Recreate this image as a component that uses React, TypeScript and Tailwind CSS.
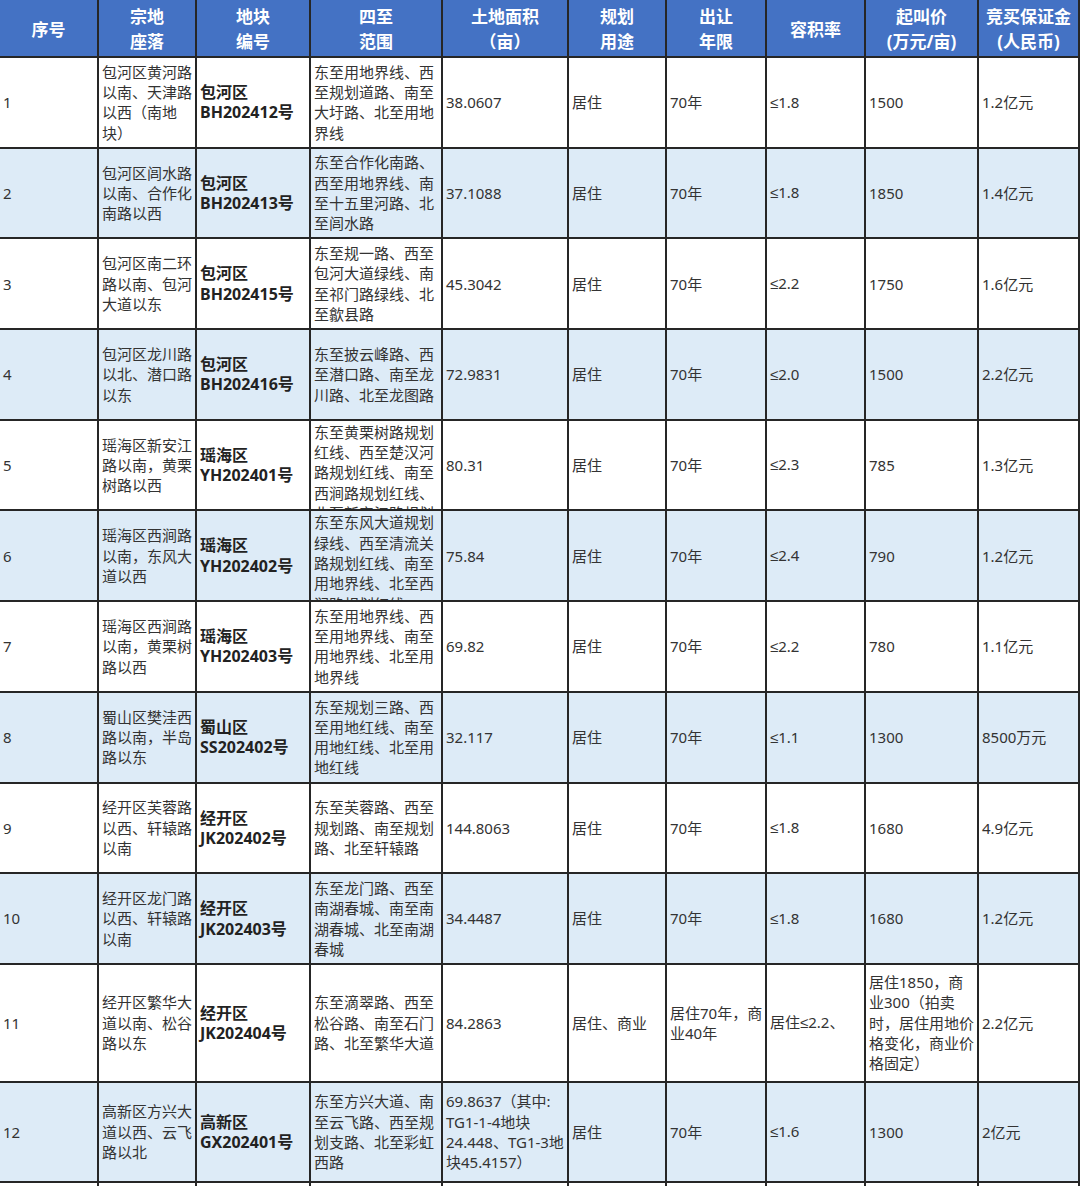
type Row = {
  no: string;
  site: string[];
  code: [string, string];
  bounds: string[];
  area: string[];
  use: string[];
  term: string[];
  far: string[];
  price: string[];
  deposit: string;
  clip?: boolean;
};

const headers = [
  ["序号"],
  ["宗地", "座落"],
  ["地块", "编号"],
  ["四至", "范围"],
  ["土地面积", "（亩）"],
  ["规划", "用途"],
  ["出让", "年限"],
  ["容积率"],
  ["起叫价", "(万元/亩)"],
  ["竞买保证金", "(人民币)"],
];

const rows: Row[] = [
  {
    no: "1",
    site: ["包河区黄河路", "以南、天津路", "以西（南地", "块）"],
    code: ["包河区", "BH202412号"],
    bounds: ["东至用地界线、西", "至规划道路、南至", "大圩路、北至用地", "界线"],
    area: ["38.0607"],
    use: ["居住"],
    term: ["70年"],
    far: ["≤1.8"],
    price: ["1500"],
    deposit: "1.2亿元",
  },
  {
    no: "2",
    site: ["包河区闾水路", "以南、合作化", "南路以西"],
    code: ["包河区", "BH202413号"],
    bounds: ["东至合作化南路、", "西至用地界线、南", "至十五里河路、北", "至闾水路"],
    area: ["37.1088"],
    use: ["居住"],
    term: ["70年"],
    far: ["≤1.8"],
    price: ["1850"],
    deposit: "1.4亿元",
  },
  {
    no: "3",
    site: ["包河区南二环", "路以南、包河", "大道以东"],
    code: ["包河区", "BH202415号"],
    bounds: ["东至规一路、西至", "包河大道绿线、南", "至祁门路绿线、北", "至歙县路"],
    area: ["45.3042"],
    use: ["居住"],
    term: ["70年"],
    far: ["≤2.2"],
    price: ["1750"],
    deposit: "1.6亿元",
  },
  {
    no: "4",
    site: ["包河区龙川路", "以北、潜口路", "以东"],
    code: ["包河区", "BH202416号"],
    bounds: ["东至披云峰路、西", "至潜口路、南至龙", "川路、北至龙图路"],
    area: ["72.9831"],
    use: ["居住"],
    term: ["70年"],
    far: ["≤2.0"],
    price: ["1500"],
    deposit: "2.2亿元",
  },
  {
    no: "5",
    site: ["瑶海区新安江", "路以南，黄栗", "树路以西"],
    code: ["瑶海区", "YH202401号"],
    bounds: ["东至黄栗树路规划", "红线、西至楚汉河", "路规划红线、南至", "西涧路规划红线、", "北至新安江路规划", "红线"],
    area: ["80.31"],
    use: ["居住"],
    term: ["70年"],
    far: ["≤2.3"],
    price: ["785"],
    deposit: "1.3亿元",
    clip: true,
  },
  {
    no: "6",
    site: ["瑶海区西涧路", "以南，东风大", "道以西"],
    code: ["瑶海区", "YH202402号"],
    bounds: ["东至东风大道规划", "绿线、西至清流关", "路规划红线、南至", "用地界线、北至西", "涧路规划红线"],
    area: ["75.84"],
    use: ["居住"],
    term: ["70年"],
    far: ["≤2.4"],
    price: ["790"],
    deposit: "1.2亿元",
    clip: true,
  },
  {
    no: "7",
    site: ["瑶海区西涧路", "以南，黄栗树", "路以西"],
    code: ["瑶海区", "YH202403号"],
    bounds: ["东至用地界线、西", "至用地界线、南至", "用地界线、北至用", "地界线"],
    area: ["69.82"],
    use: ["居住"],
    term: ["70年"],
    far: ["≤2.2"],
    price: ["780"],
    deposit: "1.1亿元",
  },
  {
    no: "8",
    site: ["蜀山区樊洼西", "路以南，半岛", "路以东"],
    code: ["蜀山区", "SS202402号"],
    bounds: ["东至规划三路、西", "至用地红线、南至", "用地红线、北至用", "地红线"],
    area: ["32.117"],
    use: ["居住"],
    term: ["70年"],
    far: ["≤1.1"],
    price: ["1300"],
    deposit: "8500万元",
  },
  {
    no: "9",
    site: ["经开区芙蓉路", "以西、轩辕路", "以南"],
    code: ["经开区", "JK202402号"],
    bounds: ["东至芙蓉路、西至", "规划路、南至规划", "路、北至轩辕路"],
    area: ["144.8063"],
    use: ["居住"],
    term: ["70年"],
    far: ["≤1.8"],
    price: ["1680"],
    deposit: "4.9亿元",
  },
  {
    no: "10",
    site: ["经开区龙门路", "以西、轩辕路", "以南"],
    code: ["经开区", "JK202403号"],
    bounds: ["东至龙门路、西至", "南湖春城、南至南", "湖春城、北至南湖", "春城"],
    area: ["34.4487"],
    use: ["居住"],
    term: ["70年"],
    far: ["≤1.8"],
    price: ["1680"],
    deposit: "1.2亿元",
  },
  {
    no: "11",
    site: ["经开区繁华大", "道以南、松谷", "路以东"],
    code: ["经开区", "JK202404号"],
    bounds: ["东至滴翠路、西至", "松谷路、南至石门", "路、北至繁华大道"],
    area: ["84.2863"],
    use: ["居住、商业"],
    term: ["居住70年，商", "业40年"],
    far: ["居住≤2.2、"],
    price: ["居住1850，商", "业300（拍卖", "时，居住用地价", "格变化，商业价", "格固定）"],
    deposit: "2.2亿元",
  },
  {
    no: "12",
    site: ["高新区方兴大", "道以西、云飞", "路以北"],
    code: ["高新区", "GX202401号"],
    bounds: ["东至方兴大道、南", "至云飞路、西至规", "划支路、北至彩虹", "西路"],
    area: ["69.8637（其中:", "TG1-1-4地块", "24.448、TG1-3地", "块45.4157）"],
    use: ["居住"],
    term: ["70年"],
    far: ["≤1.6"],
    price: ["1300"],
    deposit: "2亿元",
  },
];

// the ≤ sign falls back to the CJK face (too wide), so give it a Latin one
function Text({ text }: { text: string }) {
  const parts = text.split("≤");
  return (
    <>
      {parts.map((p, i) => (
        <span key={i}>
          {i > 0 && <span className="font-['Liberation_Sans',sans-serif]">≤</span>}
          {p}
        </span>
      ))}
    </>
  );
}

function Cell({
  lines,
  bg,
  bold,
  clip,
}: {
  lines: string[];
  bg: string;
  bold?: boolean;
  clip?: boolean;
}) {
  return (
    <div
      className={`${bg} flex flex-col overflow-hidden pl-[3px] leading-[20.3px] ${
        clip ? "justify-start pt-[1px]" : "justify-center"
      } ${bold ? "text-[16px] font-bold text-[#222]" : "text-[15px] text-[#333]"}`}
    >
      {lines.map((l, i) => (
        <span key={i} className="block whitespace-nowrap">
          <Text text={l} />
        </span>
      ))}
    </div>
  );
}

export default function App() {
  return (
    <div className="w-[1080px] bg-white font-['Noto_Sans','Noto_Sans_CJK_SC',sans-serif]">
      <div className="grid grid-cols-[97px_96px_112px_130px_124px_96px_98px_97px_111px_99px] grid-rows-[56px_repeat(10,88.7px)_116px_98px_40px] gap-[2px] border-r-2 border-[#262626] bg-[#262626]">
        {headers.map((h, i) => (
          <div
            key={i}
            className="flex flex-col items-center justify-center bg-[#4472C4] pt-[2px] text-center text-[17px] font-bold leading-[25px] text-white"
          >
            {h.map((t, j) => (
              <span key={j} className="whitespace-nowrap">
                {t}
              </span>
            ))}
          </div>
        ))}
        {rows.map((r, i) => {
          const bg = i % 2 === 0 ? "bg-white" : "bg-[#DDEBF7]";
          return [
            <Cell key={`${i}-no`} lines={[r.no]} bg={bg} />,
            <Cell key={`${i}-site`} lines={r.site} bg={bg} />,
            <Cell key={`${i}-code`} lines={r.code} bg={bg} bold />,
            <Cell key={`${i}-bounds`} lines={r.bounds} bg={bg} clip={r.clip} />,
            <Cell key={`${i}-area`} lines={r.area} bg={bg} />,
            <Cell key={`${i}-use`} lines={r.use} bg={bg} />,
            <Cell key={`${i}-term`} lines={r.term} bg={bg} />,
            <Cell key={`${i}-far`} lines={r.far} bg={bg} />,
            <Cell key={`${i}-price`} lines={r.price} bg={bg} />,
            <Cell key={`${i}-dep`} lines={[r.deposit]} bg={bg} />,
          ];
        })}
        {Array.from({ length: 10 }).map((_, i) => (
          <div key={`tail-${i}`} className="bg-white" />
        ))}
      </div>
    </div>
  );
}
